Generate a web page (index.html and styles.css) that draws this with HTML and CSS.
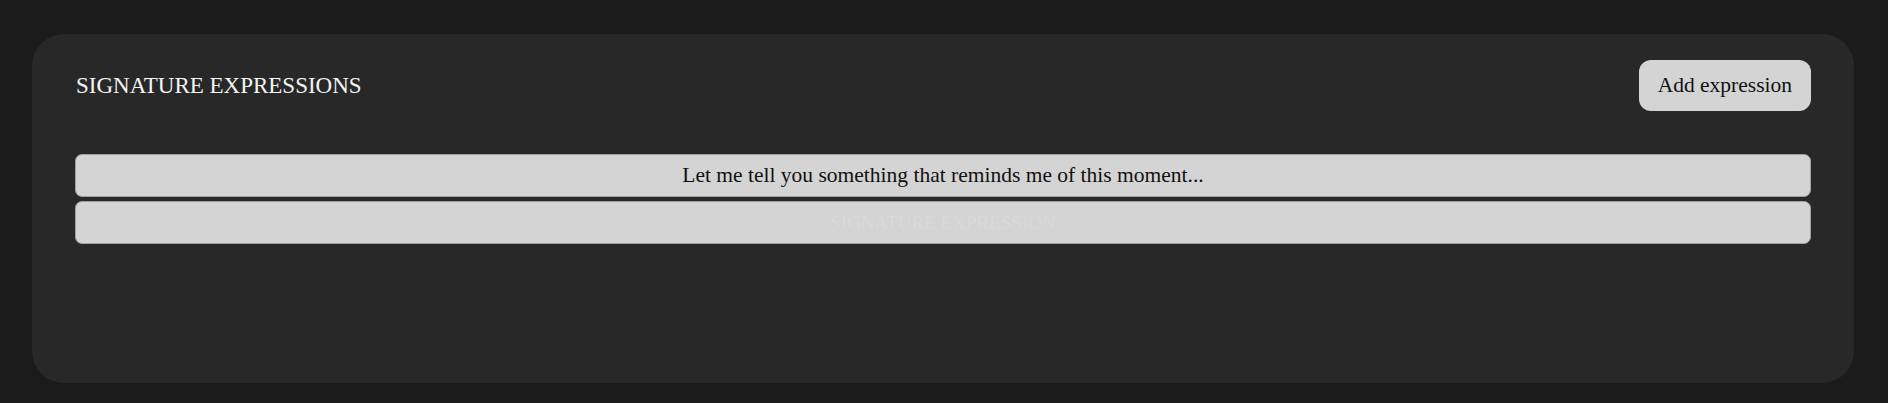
FILE: index.html
```html
<!DOCTYPE html>
<html lang="en">
<head>
<meta charset="UTF-8" />
<meta name="viewport" content="width=device-width, initial-scale=1" />
<title>Signature Expressions</title>
<link rel="stylesheet" href="styles.css">
</head>
<body>

<section class="card">
  <div class="card-head">
    <h2 class="card-title">SIGNATURE EXPRESSIONS</h2>
    <button class="add-btn" type="button">Add expression</button>
  </div>

  <div class="expr-list">
    <input class="expr" type="text" value="Let me tell you something that reminds me of this moment..." />
    <input class="expr" type="text" placeholder="SIGNATURE EXPRESSION" />
  </div>
</section>

</body>
</html>
```

FILE: styles.css
```css
html, body {
  margin: 0;
  height: 100%;
}
body {
  background: #1b1b1b;
  font-family: "Liberation Serif", "DejaVu Serif", serif;
  padding: 34px 34px 0 32px;
  box-sizing: border-box;
}
.card {
  background: #282828;
  border-radius: 32px;
  height: 349px;
  padding: 26px 43px 0 43px;
  box-sizing: border-box;
}
.card-head {
  display: flex;
  align-items: center;
  justify-content: space-between;
}
.card-title {
  margin: 0;
  color: #f4f4f4;
  font-weight: normal;
  font-size: 23px;
  padding-left: 1px;
}
.add-btn {
  background: #d4d4d4;
  color: #111;
  border: none;
  border-radius: 12px;
  height: 51px;
  padding: 0 19px;
  font-family: inherit;
  font-size: 21.5px;
}
.expr-list {
  display: flex;
  flex-direction: column;
  gap: 4px;
  margin-top: 43px;
}
.expr {
  height: 43px;
  box-sizing: border-box;
  background: #d4d4d4;
  border: 1px solid #a0a0a0;
  border-radius: 7px;
  color: #111;
  font-family: inherit;
  font-size: 21.5px;
  text-align: center;
  outline: none;
}
.expr::placeholder {
  color: #d9d9d9;
  font-size: 19px;
}
```
